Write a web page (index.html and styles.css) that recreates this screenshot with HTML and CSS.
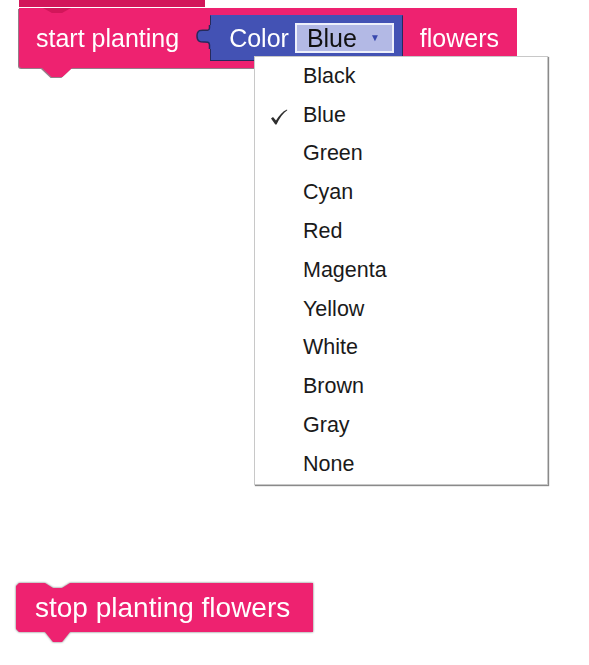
FILE: index.html
```html
<!DOCTYPE html>
<html>
<head>
<meta charset="utf-8">
<link rel="stylesheet" href="styles.css">
</head>
<body>
<div class="workspace">
  <div class="prev-block"></div>

  <div class="block start-block">
    <span class="label">start planting</span>
    <div class="value-block">
      <svg class="tab" width="15" height="24" viewBox="0 0 15 24">
        <path d="M15 0 L13.5 0 L13.5 3 C13.5 9 1 0 1 11 C1 22 13.5 13 13.5 20 L13.5 24 L15 24 Z" fill="#4352b4"/>
        <path d="M13.5 0 L13.5 3 C13.5 9 1 0 1 11 C1 22 13.5 13 13.5 20 L13.5 24" fill="none" stroke="#262a5c" stroke-width="1.5"/>
      </svg>
      <span class="label">Color</span>
      <span class="field">Blue <span class="arrow">▼</span></span>
    </div>
    <span class="label flowers">flowers</span>
  </div>

  <ul class="menu">
    <li>Black</li>
    <li class="checked">
      <svg class="check" width="18" height="16" viewBox="0 0 18 16">
        <path d="M1 9.5 L3 8 L6 11.5 C9 6.5 12.5 2.5 17 0.5 L17.3 1.2 C13 4 9.5 9 6.5 15.5 L5.3 15.5 Z" fill="#2e2e2e"/>
      </svg>
      Blue
    </li>
    <li>Green</li>
    <li>Cyan</li>
    <li>Red</li>
    <li>Magenta</li>
    <li>Yellow</li>
    <li>White</li>
    <li>Brown</li>
    <li>Gray</li>
    <li>None</li>
  </ul>

  <div class="stop-wrap">
    <div class="stop-block">
      <span class="label">stop planting flowers</span>
    </div>
  </div>
</div>
</body>
</html>
```

FILE: styles.css
```css
html, body {
  margin: 0;
  padding: 0;
  background: #ffffff;
}

.workspace {
  position: relative;
  width: 589px;
  height: 665px;
  overflow: hidden;
  font-family: "Liberation Sans", Arial, sans-serif;
}

.label {
  color: #ffffff;
  font-size: 25px;
  line-height: 1;
  white-space: nowrap;
}

.prev-block {
  position: absolute;
  left: 19px;
  top: 0;
  width: 186px;
  height: 7px;
  background: #d2165a;
}

.start-block {
  position: absolute;
  left: 19px;
  top: 8px;
  height: 60px;
  display: flex;
  align-items: center;
  padding: 0 18px 0 17px;
  background: #ee2270;
  border-radius: 0 0 0 3px;
  filter: drop-shadow(-1px 1px 0 rgba(60, 20, 40, 0.55));
}

.start-block::before {
  content: "";
  position: absolute;
  left: 24px;
  top: 0;
  width: 28px;
  height: 5px;
  background: #d2165a;
  clip-path: polygon(0 0, 100% 0, 68% 100%, 32% 100%);
}

.start-block::after {
  content: "";
  position: absolute;
  left: 23px;
  top: 60px;
  width: 30px;
  height: 9px;
  background: #ee2270;
  clip-path: polygon(0 0, 100% 0, 68% 100%, 32% 100%);
}

.value-block {
  position: relative;
  display: flex;
  align-items: center;
  height: 46px;
  box-sizing: border-box;
  margin-left: 31px;
  padding: 0 8px 0 18px;
  background: #4352b4;
  border: 1.5px solid #262a5c;
  border-top-color: #4352b4;
}

.value-block .tab {
  position: absolute;
  left: -15px;
  top: 9px;
}

.field {
  display: flex;
  align-items: center;
  height: 30px;
  box-sizing: border-box;
  margin-left: 6px;
  padding: 0 12px 0 10px;
  background: #b3b9e5;
  border: 2px solid #eef0fb;
  color: #111111;
  font-size: 25px;
  line-height: 1;
  white-space: nowrap;
}

.arrow {
  color: #3847ad;
  font-size: 10px;
  margin-left: 13px;
}

.flowers {
  margin-left: 17px;
}

.menu {
  position: absolute;
  left: 254px;
  top: 56px;
  width: 294px;
  margin: 0;
  padding: 0;
  list-style: none;
  background: #ffffff;
  border: 1px solid #c8c8c8;
  box-sizing: border-box;
  box-shadow: 1px 1px 1px #8a8a8a;
}

.menu li {
  position: relative;
  height: 38.8px;
  display: flex;
  align-items: center;
  padding-left: 48px;
  font-size: 21.5px;
  color: #1a1a1a;
}

.menu .check {
  position: absolute;
  left: 15px;
  top: 13px;
}

.stop-wrap {
  position: absolute;
  left: 16px;
  top: 583px;
  filter: drop-shadow(0 0 1px rgba(90, 90, 90, 0.9));
}

.stop-block {
  width: 297px;
  height: 59px;
  box-sizing: border-box;
  padding: 0 0 10px 19px;
  display: flex;
  align-items: center;
  background: #ee2270;
  clip-path: polygon(0 3px, 3px 0, 29px 0, 37px 5px, 46px 5px, 54px 0, 100% 0, 100% 49px, 54px 49px, 46px 59px, 37px 59px, 29px 49px, 3px 49px, 0 46px);
}

.stop-block .label {
  font-size: 28px;
}
```
